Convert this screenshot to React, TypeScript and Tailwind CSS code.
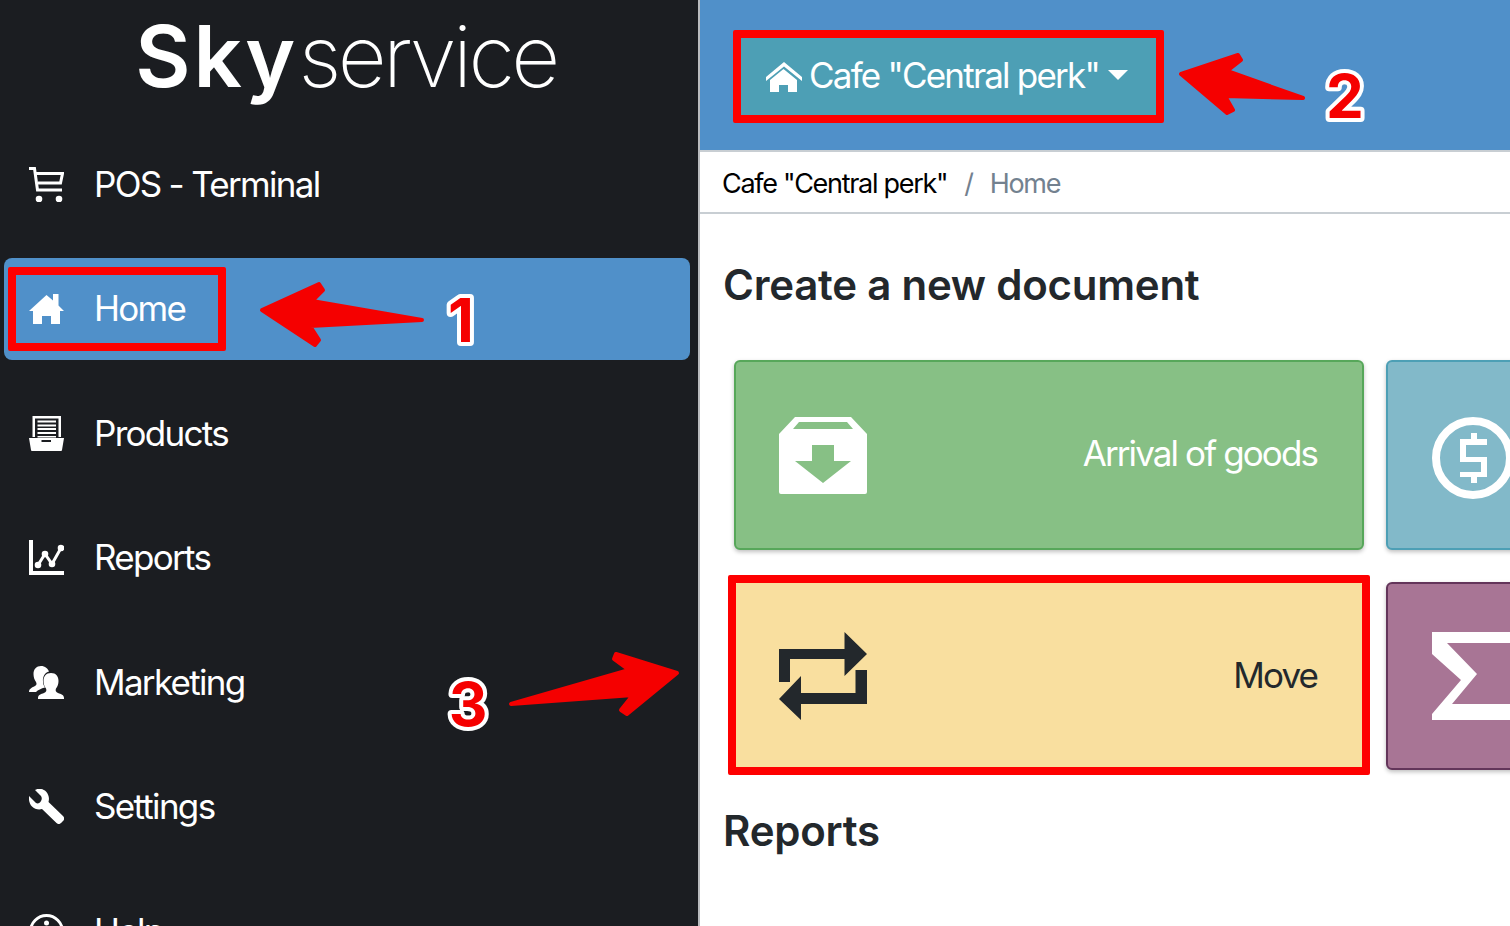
const font = { fontFamily: "Inter, 'Liberation Sans', sans-serif" };

function CartIcon() {
  return (
    <svg viewBox="0 0 35 35" className="w-[35px] h-[35px] shrink-0" fill="none" stroke="white" strokeWidth="3">
      <path d="M0 1.500H5.500L8.500 23H33" />
      <path d="M7 6.500H33.500L31.500 16H9" />
      <circle cx="10" cy="32" r="3.300" fill="white" stroke="none" />
      <circle cx="30" cy="32" r="3.300" fill="white" stroke="none" />
    </svg>
  );
}

function HomeIcon() {
  return (
    <svg viewBox="0 0 35 30" className="w-[35px] h-[30px] shrink-0" fill="white">
      <path d="M17.500 1L24 6.500V0H29.500V11.500L35 17H31V30H22V22H13V30H4V17H0z" />
    </svg>
  );
}

function ProductsIcon() {
  return (
    <svg viewBox="0 0 35 35" className="w-[35px] h-[35px] shrink-0" fill="white">
      <path d="M3.500 0H32V21H29.500V2.500H6V21H3.500z" />
      <path d="M8.500 4.500H27V6.500H8.500zM8.500 8.500H27V10.500H8.500zM8.500 12H27V14H8.500zM8.500 16H27V18H8.500zM8.500 20H27V21.500H8.500z" />
      <path fillRule="evenodd" d="M0 22H35L33 34a1 1 0 0 1-1 1H3a1 1 0 0 1-1-1zM12.500 24V26H22V24z" />
    </svg>
  );
}

function ReportsIcon() {
  return (
    <svg viewBox="0 0 35 35" className="w-[35px] h-[35px] shrink-0" fill="white">
      <path d="M0 0H4V31H35V35H0z" />
      <path d="M9 25L16 14L23 24L32 8" fill="none" stroke="white" strokeWidth="3" />
      <circle cx="9" cy="25" r="3.300" />
      <circle cx="16" cy="14" r="3.300" />
      <circle cx="23" cy="24" r="3.300" />
      <circle cx="32" cy="8" r="3.300" />
    </svg>
  );
}

function MarketingIcon() {
  return (
    <svg viewBox="0 0 35 33" className="w-[35px] h-[33px] shrink-0" fill="white">
      <path d="M12 0c4 0 7 2.500 8 5.500-4 1-6.500 5-6 10 0 3 1 4.500 2 6-4 1-7 2.500-9 4.500H0c0-3 2-4 6-6 1.500-1 2-2 1-4-1.500-2-2.500-5-2.500-8C4.500 3 7.500 0 12 0z" />
      <path d="M22 7c5 0 7.500 3.500 7.500 8 0 3-1 5.500-2.500 7.500-1 2 0 3.500 2 4.500 3 1 6 2 6 5v1H9v-1c0-3 3-4 6-5 2-1 3-2.500 2-4.500-1.500-2-2.500-4.500-2.500-7.500 0-4.500 2.500-8 7.500-8z" />
    </svg>
  );
}

function SettingsIcon() {
  return (
    <svg viewBox="0 0 35 35" className="w-[35px] h-[35px] shrink-0" fill="white">
      <path d="M0 7L7 14C9 15 11 14 12 12S13 9 12 7L6 1C9-1 14-.500 17 2.500 20 6 20.500 9.500 19.500 13L34 27C35.500 28.500 35.500 30 34.500 31.500L32 34C30.500 35.500 29 35.500 27.500 34L13 20C9.500 21 5.500 20 3 17.500 .500 15-.500 11 0 7z" />
    </svg>
  );
}

function HelpIcon() {
  return (
    <svg viewBox="0 0 35 35" className="w-[35px] h-[35px] shrink-0" fill="none" stroke="white" strokeWidth="3">
      <circle cx="17.500" cy="17.500" r="16" />
      <circle cx="17.500" cy="9" r="2.500" fill="white" stroke="none" />
      <path d="M17.500 15v11" />
    </svg>
  );
}

function RoofHome() {
  return (
    <svg viewBox="0 0 36 30" className="w-[36px] h-[30px] shrink-0" fill="white">
      <path d="M18 0L36 15V19L18 4.500 0 19V15z" />
      <path d="M17.500 7L31 18V30H22V23H13V30H4V18z" />
    </svg>
  );
}

function BoxIcon() {
  return (
    <svg viewBox="0 0 88 77" className="w-[88px] h-[77px] shrink-0" fill="white">
      <path
        fillRule="evenodd"
        d="M16 0H72L88 17V75a2 2 0 0 1-2 2H2a2 2 0 0 1-2-2V17zM20 5L14 12H74L68 5zM33 28V44H16L44 66 72 44H55V28z"
      />
    </svg>
  );
}

function DollarIcon() {
  return (
    <svg viewBox="0 0 82 82" className="w-[82px] h-[82px] shrink-0 mt-[6px]" fill="white">
      <circle cx="41" cy="41" r="37" fill="none" stroke="white" strokeWidth="8" />
      <path d="M39 16H45V22H55V28H34V40H55V60H45V66H39V60H28V55H49V45H28V22H39z" />
    </svg>
  );
}

function RetweetIcon() {
  return (
    <svg viewBox="0 0 88 89" className="w-[88px] h-[89px] shrink-0" fill="#23282c">
      <path d="M0 17H65.500V0L88 22 65.500 44V27H11V50H0z" />
      <path d="M88 38V72H22V88L0 67 22 44V61H76.500V38z" />
    </svg>
  );
}

function SigmaIcon() {
  return (
    <svg viewBox="0 0 88 89" className="w-[88px] h-[89px] shrink-0" fill="white">
      <path d="M0 0H88V11H15L45 42 20 72H88V88H0V82L29 48 0 22z" />
    </svg>
  );
}

const navItems = [
  { label: "POS - Terminal", icon: <CartIcon /> },
  { label: "Home", icon: <HomeIcon />, active: true },
  { label: "Products", icon: <ProductsIcon /> },
  { label: "Reports", icon: <ReportsIcon /> },
  { label: "Marketing", icon: <MarketingIcon /> },
  { label: "Settings", icon: <SettingsIcon /> },
  { label: "Help", icon: <HelpIcon /> },
];

// red marks laid on top of the screenshot
function Annotations() {
  return (
    <svg viewBox="0 0 1510 926" className="absolute inset-0 w-[1510px] h-[926px] pointer-events-none">
      <g fill="#f50000" stroke="#f50000" strokeWidth="4" strokeLinejoin="round">
        <path d="M262 310L319 284l4 6-11 11L422 320 310 326 319 340 315 345z" />
        <path d="M1181 74L1238 55l3 5-14 11L1303 98 1225 96 1233 110 1227 113z" />
        <path d="M677 673L616 654l-2 5 15 11L511 704 633 695 621 710 627 714z" />
      </g>
      <g
        fill="#f50000"
        stroke="white"
        strokeWidth="8"
        strokeLinejoin="round"
        className="font-bold text-[60px]"
        style={{ ...font, paintOrder: "stroke" }}
      >
        <text x="461" y="342" textAnchor="middle">1</text>
        <text x="1345" y="118" textAnchor="middle">2</text>
        <text x="468" y="726" textAnchor="middle">3</text>
      </g>
    </svg>
  );
}

export default function App() {
  return (
    <div className="relative w-[1510px] h-[926px] overflow-hidden flex bg-white" style={font}>
      <aside className="w-[698px] shrink-0 bg-[#1b1d21] text-white">
        <div className="h-[133px] flex justify-center pt-[6px] pr-[6px] text-[85px] leading-[102px]">
          <span className="font-semibold tracking-[3px]">Sky</span>
          <span className="font-extralight tracking-[-3.6px]">service</span>
        </div>
        <nav className="flex flex-col gap-[22.5px] pl-[4px] pr-[8px]">
          {navItems.map((item) => (
            <a
              key={item.label}
              className={`h-[102px] shrink-0 flex items-center gap-[30px] pl-[25px] rounded-lg text-[35px] tracking-[-1.7px] ${
                item.active ? "bg-[#5090c9]" : ""
              }`}
            >
              {item.icon}
              <span>{item.label}</span>
            </a>
          ))}
        </nav>
      </aside>

      <main className="flex-1 min-w-0 border-l-2 border-[#b9bbbe]">
        <header className="h-[152px] bg-[#5090c9] border-b-2 border-[#c8ced3] pl-[41px] pt-[38px]">
          <button className="w-[415px] h-[77px] bg-[#4d9fb5] text-white flex items-center justify-center gap-[7px] pr-[3px] text-[35px] tracking-[-1.8px]">
            <RoofHome />
            <span className="pb-[2px]">Cafe "Central perk"</span>
            <span className="ml-[2px] mb-[4px] w-0 h-0 border-x-[10px] border-x-transparent border-t-[10px] border-t-white" />
          </button>
        </header>
        <div className="h-[62px] border-b-2 border-[#c8ced3] flex items-center pl-[22px] pt-[4px] text-[27px] tracking-[-1.3px] text-black">
          <span>Cafe "Central perk"</span>
          <span className="ml-[17px] text-[#73818f]">/</span>
          <span className="ml-[17px] text-[#73818f]">Home</span>
        </div>

        <div className="pl-[23px] text-[#23282c]">
          <h2 className="mt-[46px] h-[50px] text-[42px] leading-[50px] font-semibold tracking-[-0.24px]">
            Create a new document
          </h2>
          <div className="mt-[50px] pl-[11px] grid grid-cols-[630px_630px] gap-x-[22px] gap-y-[32px]">
            <div className="h-[190px] rounded-md border-2 border-[#57a75a] bg-[#87c085] shadow-[0_2px_4px_rgba(0,0,0,0.25)] flex items-center justify-between pl-[43px] pr-[45px] text-white">
              <BoxIcon />
              <span className="pb-[4px] text-[35px] tracking-[-1.9px]">Arrival of goods</span>
            </div>
            <div className="h-[190px] rounded-md border-2 border-[#4d9fb5] bg-[#82b9c9] shadow-[0_2px_4px_rgba(0,0,0,0.25)] flex items-center pl-[44px] text-white">
              <DollarIcon />
            </div>
            <div className="h-[188px] rounded-md bg-[#f9df9f] flex items-center justify-between pl-[45px] pr-[47px]">
              <RetweetIcon />
              <span className="pb-[2px] text-[35px] tracking-[-1.9px]">Move</span>
            </div>
            <div className="h-[188px] rounded-md border-2 border-[#63355a] bg-[#a87595] shadow-[0_2px_4px_rgba(0,0,0,0.25)] flex items-center pl-[44px]">
              <SigmaIcon />
            </div>
          </div>
          <h2 className="mt-[36px] text-[42px] leading-[50px] font-semibold tracking-[-0.24px]">Reports</h2>
        </div>
      </main>

      {/* highlight frames */}
      <div className="absolute left-[8px] top-[267px] w-[218px] h-[84px] border-[8px] border-[#fe0000] rounded-[2px]" />
      <div className="absolute left-[733px] top-[30px] w-[431px] h-[93px] border-[8px] border-[#fe0000] rounded-[2px]" />
      <div className="absolute left-[728px] top-[575px] w-[642px] h-[200px] border-[8px] border-[#fe0000] rounded-[2px]" />
      <Annotations />
    </div>
  );
}
